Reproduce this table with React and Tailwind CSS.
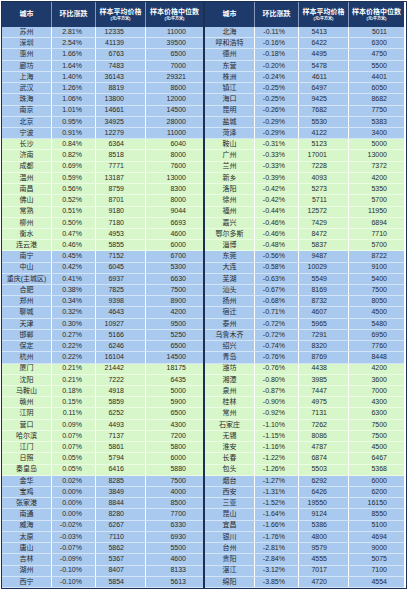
import React from 'react';

const BLUE = 'bg-[#a9c9ef]';
const GREEN = 'bg-[#d7f6c9]';

const left = [
  ['苏州', '2.81%', '12335', '11000'],
  ['深圳', '2.54%', '41139', '39500'],
  ['惠州', '1.66%', '6763', '6500'],
  ['廊坊', '1.64%', '7483', '7000'],
  ['上海', '1.40%', '36143', '29321'],
  ['武汉', '1.26%', '8819', '8600'],
  ['珠海', '1.06%', '13800', '12000'],
  ['南京', '1.01%', '14661', '14500'],
  ['北京', '0.95%', '34925', '28000'],
  ['宁波', '0.91%', '12279', '11000'],
  ['长沙', '0.84%', '6364', '6040'],
  ['济南', '0.82%', '8518', '8000'],
  ['成都', '0.69%', '7771', '7600'],
  ['温州', '0.59%', '13187', '13000'],
  ['南昌', '0.56%', '8759', '8300'],
  ['佛山', '0.52%', '8701', '8000'],
  ['常熟', '0.51%', '9180', '9044'],
  ['柳州', '0.50%', '7180', '6693'],
  ['衡水', '0.47%', '4953', '4600'],
  ['连云港', '0.46%', '5855', '6000'],
  ['南宁', '0.45%', '7152', '6700'],
  ['中山', '0.42%', '6045', '5300'],
  ['重庆(主城区)', '0.41%', '6937', '6630'],
  ['合肥', '0.38%', '7825', '7500'],
  ['郑州', '0.34%', '9398', '8900'],
  ['聊城', '0.32%', '4643', '4200'],
  ['天津', '0.30%', '10927', '9500'],
  ['邯郸', '0.27%', '5166', '5250'],
  ['保定', '0.22%', '6246', '6500'],
  ['杭州', '0.22%', '16104', '14500'],
  ['厦门', '0.21%', '21442', '18175'],
  ['沈阳', '0.21%', '7222', '6435'],
  ['马鞍山', '0.18%', '4918', '5000'],
  ['赣州', '0.15%', '5859', '5900'],
  ['江阴', '0.11%', '6252', '6500'],
  ['营口', '0.09%', '4493', '4300'],
  ['哈尔滨', '0.07%', '7137', '7200'],
  ['江门', '0.07%', '5861', '5800'],
  ['日照', '0.05%', '5794', '6000'],
  ['秦皇岛', '0.05%', '6416', '5880'],
  ['金华', '0.02%', '8285', '7500'],
  ['宝鸡', '0.00%', '3849', '4000'],
  ['张家港', '0.00%', '8844', '8500'],
  ['南通', '0.00%', '8280', '7700'],
  ['威海', '-0.02%', '6267', '6330'],
  ['太原', '-0.03%', '7110', '6930'],
  ['唐山', '-0.07%', '5862', '5500'],
  ['吉林', '-0.09%', '5367', '4600'],
  ['湖州', '-0.10%', '8407', '8133'],
  ['西宁', '-0.10%', '5854', '5613'],
];

const right = [
  ['北海', '-0.11%', '5413', '5011'],
  ['呼和浩特', '-0.16%', '6422', '6300'],
  ['德州', '-0.18%', '4495', '4750'],
  ['东营', '-0.20%', '5478', '5500'],
  ['株洲', '-0.24%', '4611', '4401'],
  ['镇江', '-0.25%', '6497', '6050'],
  ['海口', '-0.25%', '9425', '8682'],
  ['昆明', '-0.26%', '7682', '7750'],
  ['盐城', '-0.29%', '5530', '5383'],
  ['菏泽', '-0.29%', '4122', '3400'],
  ['鞍山', '-0.31%', '5123', '5000'],
  ['广州', '-0.33%', '17001', '13000'],
  ['兰州', '-0.33%', '7228', '7372'],
  ['新乡', '-0.39%', '4093', '4200'],
  ['洛阳', '-0.42%', '5273', '5350'],
  ['徐州', '-0.42%', '5711', '5700'],
  ['福州', '-0.44%', '12572', '11950'],
  ['嘉兴', '-0.46%', '7429', '6894'],
  ['鄂尔多斯', '-0.46%', '8472', '7710'],
  ['淄博', '-0.48%', '5837', '5700'],
  ['东莞', '-0.56%', '9487', '8722'],
  ['大连', '-0.58%', '10029', '9100'],
  ['芜湖', '-0.63%', '5549', '5400'],
  ['汕头', '-0.67%', '8169', '7500'],
  ['扬州', '-0.68%', '8732', '8050'],
  ['宿迁', '-0.71%', '4607', '4500'],
  ['泰州', '-0.72%', '5965', '5480'],
  ['乌鲁木齐', '-0.72%', '7291', '6950'],
  ['绍兴', '-0.74%', '8320', '7760'],
  ['青岛', '-0.76%', '8769', '8448'],
  ['潍坊', '-0.76%', '4438', '4200'],
  ['湘潭', '-0.80%', '3985', '3600'],
  ['泉州', '-0.87%', '7447', '7000'],
  ['桂林', '-0.90%', '4975', '4300'],
  ['常州', '-0.92%', '7131', '6300'],
  ['石家庄', '-1.10%', '7262', '7500'],
  ['无锡', '-1.15%', '8086', '7500'],
  ['淮安', '-1.16%', '4787', '4500'],
  ['长春', '-1.22%', '6874', '6467'],
  ['包头', '-1.26%', '5503', '5368'],
  ['烟台', '-1.27%', '6292', '6000'],
  ['西安', '-1.31%', '6426', '6200'],
  ['三亚', '-1.52%', '19550', '16150'],
  ['昆山', '-1.64%', '9124', '8550'],
  ['宜昌', '-1.66%', '5386', '5100'],
  ['银川', '-1.76%', '4800', '4694'],
  ['台州', '-2.81%', '9579', '9000'],
  ['贵阳', '-2.84%', '4555', '5075'],
  ['湛江', '-3.12%', '7017', '7100'],
  ['绵阳', '-3.85%', '4720', '4554'],
];

// 10 rows per colour band: blue, green, blue, green, blue
const bandOf = (i) => (Math.floor(i / 10) % 2 === 0 ? BLUE : GREEN);

const Header = () => (
  <div className="flex h-[25px] bg-[#1e3a6b] text-white font-bold">
    <div className="w-[50px] flex items-center justify-center border-r border-[#8799bb] text-[7px]">城市</div>
    <div className="w-[44px] flex items-center justify-center border-r border-[#8799bb] text-[7px]">环比涨跌</div>
    <div className="w-[50px] flex flex-col items-center justify-center border-r border-[#8799bb]">
      <span className="text-[7px] leading-[9px]">样本平均价格</span>
      <span className="text-[4px] leading-[6px]">(元/平方米)</span>
    </div>
    <div className="flex-1 flex flex-col items-center justify-center">
      <span className="text-[7px] leading-[9px]">样本价格中位数</span>
      <span className="text-[4px] leading-[6px]">(元/平方米)</span>
    </div>
  </div>
);

const Half = ({ rows, first }) => (
  <div className={`w-[201px] flex flex-col ${first ? '' : 'border-l-2 border-[#1b2f55]'}`}>
    <Header />
    {rows.map((r, i) => (
      <div key={r[0]} className={`flex h-[11.22px] text-[7px] text-[#2b2b2b] border-b border-white/50 ${bandOf(i)}`}>
        <div className="w-[50px] flex items-center justify-center border-r border-white whitespace-nowrap">{r[0]}</div>
        <div className="w-[44px] flex items-center justify-end pr-[13px] border-r border-white">{r[1]}</div>
        <div className="w-[50px] flex items-center justify-end pr-[21px] border-r border-white">{r[2]}</div>
        <div className="flex-1 flex items-center justify-end pr-[17px]">{r[3]}</div>
      </div>
    ))}
  </div>
);

export default function App() {
  return (
    <div className="w-[409px] h-[600px] bg-white pt-[1px] pl-[1px]" style={{ fontFamily: '"Liberation Sans", "Noto Sans CJK SC", sans-serif' }}>
      <div className="w-[406px] flex border border-[#1b2f55]">
        <Half rows={left} first />
        <Half rows={right} />
      </div>
    </div>
  );
}
